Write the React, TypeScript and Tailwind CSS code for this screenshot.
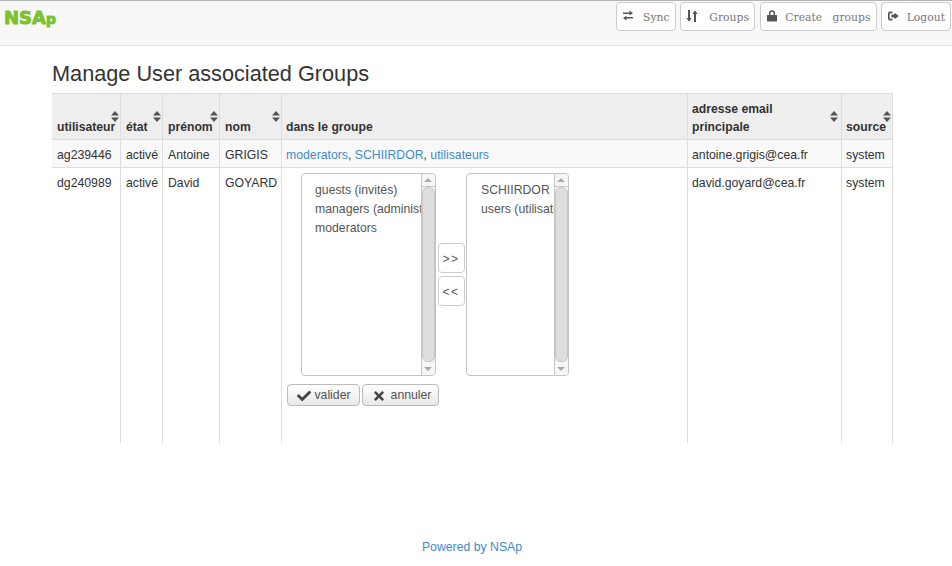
import { FaCheck, FaTimes } from "react-icons/fa";

// NSAp user / groups admin page

function TransferIcon() {
  return (
    <svg width="12" height="12" viewBox="0 0 12 12" fill="#555">
      <path d="M1 2.500h6.500V.5L11 3.300 7.500 5.500V4H1zM11 7H4.500V5.800L1 8l3.500 2.500V8.500H11z" />
    </svg>
  );
}

function SortIcon() {
  return (
    <svg width="12" height="12" viewBox="0 0 12 12" fill="#555">
      <path d="M2 0h2v8h1.600L3 11.800.4 8H2zM8 4H6.400L9 .2 11.600 4H10v8H8z" />
    </svg>
  );
}

function LockIcon() {
  return (
    <svg width="12" height="12" viewBox="0 0 12 12" fill="#555">
      <path d="M1.500 5H3V3.300a3 3 0 0 1 6 0V5h1.500a.5.5 0 0 1 .5.500V11a.5.5 0 0 1-.5.500h-9A.5.5 0 0 1 1 11V5.500A.5.5 0 0 1 1.500 5zm3 0h3V3.300a1.500 1.500 0 0 0-3 0z" />
    </svg>
  );
}

function LogoutIcon() {
  return (
    <svg width="12" height="12" viewBox="0 0 12 12" fill="#555">
      <path d="M5.500 1.500H3A2 2 0 0 0 1 3.500v5a2 2 0 0 0 2 2h2.500V8.800H3.500a.8.8 0 0 1-.8-.8V4a.8.8 0 0 1 .8-.8h2z" />
      <path d="M7.500 2.800 11.800 6 7.500 9.200V7.500H4.500v-3h3z" />
    </svg>
  );
}

function SortCaret({ className }: { className: string }) {
  return (
    <svg className={className} width="8" height="11" viewBox="0 0 8 11" fill="#555">
      <path d="M4 0 8 4.500H0zM0 6.500h8L4 11z" />
    </svg>
  );
}

function NavBtn({ icon, label, width }: { icon: React.ReactNode; label: string; width: string }) {
  return (
    <button className={`flex h-[29px] items-center justify-between rounded-[4px] border border-[#ccc] bg-white pl-[5px] pr-[5px] text-[10.800px] text-[#777] ${width}`}>
      <span className="-mt-[2px]">{icon}</span>
      <span className="mt-[3px] whitespace-pre">{label}</span>
    </button>
  );
}

function ScrollTrack() {
  return (
    <div className="flex w-[14px] shrink-0 flex-col border-l border-[#c8c6c2] bg-[#f4f3f1]">
      <div className="flex h-[13px] items-center justify-center rounded-t-[6px] border-b border-[#c8c6c2] bg-[#f7f6f5]">
        <div className="h-0 w-0 border-x-[4px] border-b-[4px] border-x-transparent border-b-[#aaa]" />
      </div>
      <div className="flex-1 rounded-[6px] border border-[#c8c6c2] bg-[#dededc]" />
      <div className="flex h-[13px] items-center justify-center rounded-b-[6px] bg-[#f7f6f5]">
        <div className="h-0 w-0 border-x-[4px] border-t-[4px] border-x-transparent border-t-[#aaa]" />
      </div>
    </div>
  );
}

function ListBox({ items, width, pad }: { items: string[]; width: string; pad: string }) {
  return (
    <div className={`flex h-[203px] overflow-hidden rounded-[4px] border border-[#c4c4c4] bg-white ${width}`}>
      <div className={`min-w-0 flex-1 overflow-hidden pt-[7px] text-[#555] ${pad}`}>
        {items.map((it) => (
          <div key={it} className="h-[19px] whitespace-nowrap leading-[19px]">
            {it}
          </div>
        ))}
      </div>
      <ScrollTrack />
    </div>
  );
}

function MoveBtn({ label }: { label: string }) {
  return (
    <button className="flex h-[30px] w-[27px] items-center justify-center rounded-[4px] border border-[#ccc] bg-white pt-[2px] text-[12px] tracking-[1.500px] text-[#555]">
      {label}
    </button>
  );
}

const HEAD = ["utilisateur", "état", "prénom", "nom"];

export default function App() {
  return (
    <div className="min-h-[566px] bg-white font-['Liberation_Sans',Arial,sans-serif] text-[12.250px] text-[#333]">
      {/* Navbar */}
      <div className="flex h-[46px] items-start justify-between border-b border-[#e7e7e7] border-t-[1px] border-t-[#b4b4b0] bg-[#f8f8f8] pr-px">
        <span className="ml-[4px] mt-[5px] font-['DejaVu_Sans',sans-serif] text-[18px] font-black leading-[24px] text-[#7cc22e] [-webkit-text-stroke:1px_#7cc22e]">
          NSA<span className="text-[14px]">p</span>
        </span>
        <div className="mt-px flex gap-[4.500px] font-['DejaVu_Serif',serif]">
          <NavBtn icon={<TransferIcon />} label="Sync" width="w-[60px]" />
          <NavBtn icon={<SortIcon />} label="Groups" width="w-[75px]" />
          <NavBtn icon={<LockIcon />} label="Create   groups" width="w-[117px]" />
          <NavBtn icon={<LogoutIcon />} label="Logout" width="w-[70px]" />
        </div>
      </div>

      {/* Content */}
      <div className="px-[52px]">
        <h1 className="mt-[16px] mb-[7px] text-[21.700px] font-medium leading-[24px] text-[#333]">
          Manage User associated Groups
        </h1>
        <table className="w-[840px] table-fixed border-collapse">
          <colgroup>
            <col className="w-[68px]" />
            <col className="w-[42px]" />
            <col className="w-[57px]" />
            <col className="w-[62px]" />
            <col className="w-[406px]" />
            <col className="w-[154px]" />
            <col className="w-[51px]" />
          </colgroup>
          <thead>
            <tr className="h-[46px] bg-[#eee] text-left align-bottom text-[12.200px] font-bold">
              {HEAD.map((h, i) => (
                <th
                  key={h}
                  className={`relative border border-[#ddd] pb-[3px] leading-[18px] whitespace-nowrap ${i === 0 ? "border-l-0 pl-[5px]" : "pl-[5.500px]"}`}
                >
                  {h}
                  <SortCaret className="absolute right-[1px] top-[17px]" />
                </th>
              ))}
              <th className="relative border border-[#ddd] pb-[3px] pl-[4.500px] leading-[18px] whitespace-nowrap">
                dans le groupe
              </th>
              <th className="relative border border-[#ddd] pb-[3px] pl-[4.500px] leading-[18px]">
                adresse email
                <br />
                principale
                <SortCaret className="absolute right-[3px] top-[17px]" />
              </th>
              <th className="relative border border-[#ddd] pb-[3px] pl-[4.500px] leading-[18px]">
                source
                <SortCaret className="absolute right-[1px] top-[17px]" />
              </th>
            </tr>
          </thead>
          <tbody>
            <tr className="h-[28px] bg-[#f9f9f9]">
              <td className="border border-l-0 border-[#ddd] pl-[5px] pt-[3px]">ag239446</td>
              <td className="border border-[#ddd] pl-[5.500px] pt-[3px]">activé</td>
              <td className="border border-[#ddd] pl-[5.500px] pt-[3px]">Antoine</td>
              <td className="border border-[#ddd] pl-[5.500px] pt-[3px]">GRIGIS</td>
              <td className="border border-[#ddd] pl-[4.500px] pt-[3px]">
                <a className="text-[#428bca]">moderators</a>, <a className="text-[#428bca]">SCHIIRDOR</a>,{" "}
                <a className="text-[#428bca]">utilisateurs</a>
              </td>
              <td className="border border-[#ddd] pl-[4.500px] pt-[3px]">antoine.grigis@cea.fr</td>
              <td className="border border-[#ddd] pl-[4.500px] pt-[3px]">system</td>
            </tr>
            <tr className="h-[275px] align-top">
              <td className="border-r border-[#ddd] pl-[5px] pt-[6px]">dg240989</td>
              <td className="border-x border-[#ddd] pl-[5.500px] pt-[6px]">activé</td>
              <td className="border-x border-[#ddd] pl-[5.500px] pt-[6px]">David</td>
              <td className="border-x border-[#ddd] pl-[5.500px] pt-[6px]">GOYARD</td>
              <td className="border-x border-[#ddd] px-[5px] pt-[5px]">
                <div className="flex items-start pl-[14px]">
                  <ListBox
                    items={["guests (invités)", "managers (administrateurs)", "moderators"]}
                    width="w-[135px]"
                    pad="pl-[13.500px]"
                  />
                  <div className="ml-[2px] mr-px mt-[70px] flex flex-col gap-[3px]">
                    <MoveBtn label=">>" />
                    <MoveBtn label="<<" />
                  </div>
                  <ListBox items={["SCHIIRDOR", "users (utilisateurs)"]} width="w-[103px]" pad="pl-[14.500px]" />
                </div>
                <div className="mt-[8px] flex gap-[2px]">
                  <button className="flex h-[22px] w-[73px] items-center justify-center gap-[3px] rounded-[4px] border border-[#bbb] bg-gradient-to-b from-white to-[#e8e8e8] pl-[2px] pt-px text-[#555]">
                    <FaCheck className="text-[14px] text-[#444]" />
                    valider
                  </button>
                  <button className="flex h-[22px] w-[77px] items-center justify-center gap-[5px] rounded-[4px] border border-[#bbb] bg-gradient-to-b from-white to-[#e8e8e8] pl-[3px] pt-px text-[#555]">
                    <FaTimes className="text-[14px] text-[#444]" />
                    annuler
                  </button>
                </div>
              </td>
              <td className="border-x border-[#ddd] pl-[4.500px] pt-[6px]">david.goyard@cea.fr</td>
              <td className="border-x border-[#ddd] pl-[4.500px] pt-[6px]">system</td>
            </tr>
          </tbody>
        </table>
      </div>

      {/* Footer */}
      <div className="mt-[95px] pr-[8px] text-center text-[#428bca]">Powered by NSAp</div>
    </div>
  );
}
